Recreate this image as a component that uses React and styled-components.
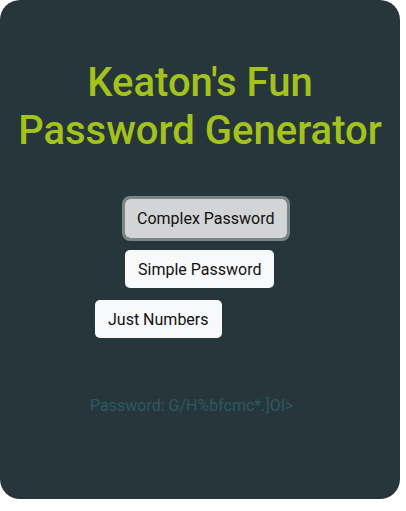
import React from "react";
import styled, { createGlobalStyle } from "styled-components";

const Global = createGlobalStyle`
  html, body { margin: 0; padding: 0; background: #ffffff; }
  body { font-family: Roboto, "Liberation Sans", sans-serif; }
`;

const Card = styled.div`
  box-sizing: border-box;
  width: 400px;
  height: 499px;
  background: #27363b;
  border-radius: 20px;
  padding-top: 59px;
  display: flex;
  flex-direction: column;
`;

const Title = styled.h1`
  margin: 0;
  font-family: Roboto, "Liberation Sans", sans-serif;
  font-weight: 500;
  font-size: 40px;
  line-height: 48px;
  color: #a4c21c;
  text-align: center;
`;

const Buttons = styled.div`
  display: flex;
  flex-direction: column;
  align-items: flex-start;
  gap: 12px;
  margin-top: 44px;
`;

const Button = styled.button`
  box-sizing: border-box;
  height: ${(p) => (p.$active ? 39 : 38)}px;
  margin-left: ${(p) => p.$left}px;
  padding: 0 ${(p) => (p.$active ? 12 : 13)}px;
  border: none;
  border-radius: 5px;
  background: ${(p) => (p.$active ? "#d3d4d6" : "#f8f9fb")};
  color: #111;
  font-family: Roboto, "Liberation Sans", sans-serif;
  font-size: 16px;
  cursor: pointer;
  outline: ${(p) => (p.$active ? "3px solid #7b8586" : "none")};
  outline-offset: 0;
`;

const Output = styled.p`
  margin: 58px 0 0 90px;
  font-family: Roboto, "Liberation Sans", sans-serif;
  font-size: 16px;
  line-height: 19px;
  color: #2b5960;
`;

export default function App() {
  return (
    <>
      <Global />
      <Card>
        <Title>
          Keaton's Fun
          <br />
          Password Generator
        </Title>
        <Buttons>
          <Button $left={125} $active>Complex Password</Button>
          <Button $left={125}>Simple Password</Button>
          <Button $left={95}>Just Numbers</Button>
        </Buttons>
        <Output>Password: G/H%bfcmc*.]OI&gt;</Output>
      </Card>
    </>
  );
}
